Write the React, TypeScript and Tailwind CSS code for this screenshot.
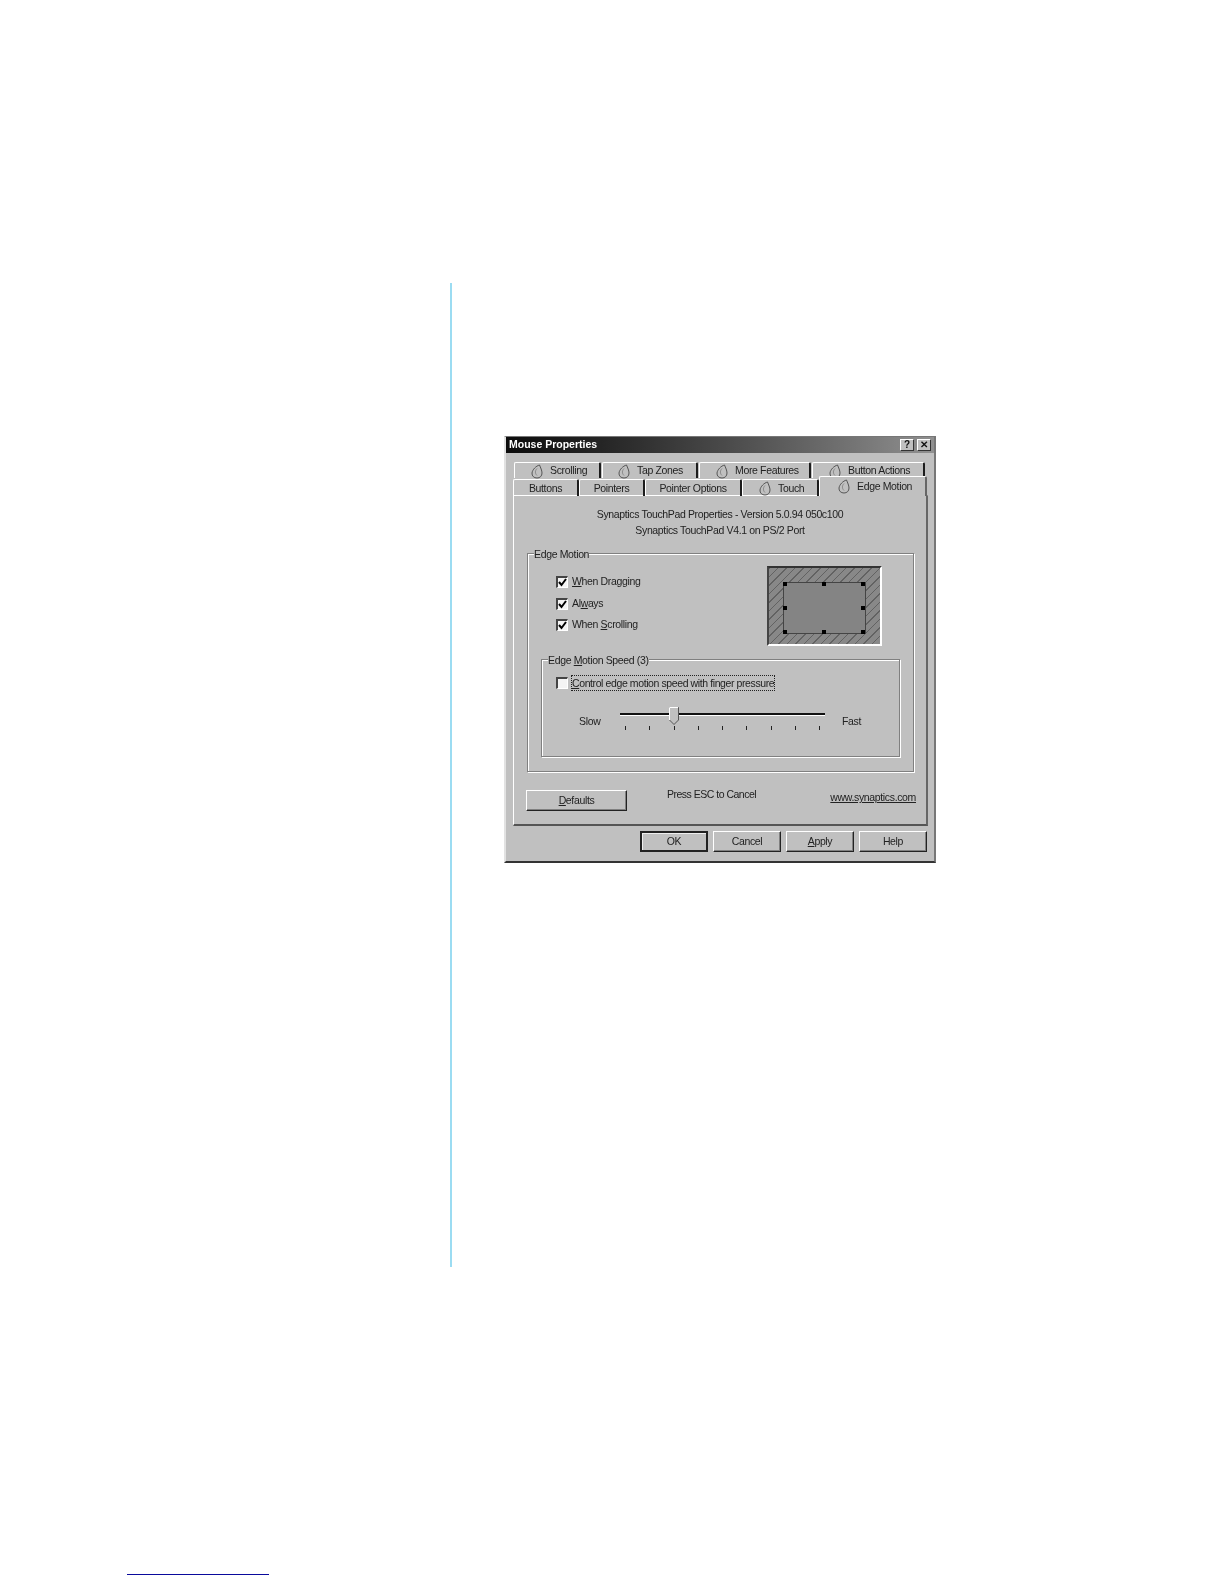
import React from "react";

const Drop = () => (
  <svg width="12" height="15" viewBox="0 0 12 15" className="shrink-0" fill="none" stroke="#555" strokeWidth="1">
    <path d="M8.5 1 C5 2 1.5 5.5 1 9 C.7 12 3 14 6 14 C9 14 11 12 11 9 C11 6.5 9.5 3.5 8.5 1" />
    <path d="M6 4.5 C4 6.5 3.8 9.5 6 11.5" stroke="#8a8a8a" />
  </svg>
);

const tabBase =
  "flex items-center border-t border-l border-r-2 border-t-white border-l-white border-r-[#1c1c1c] rounded-t-[2px] text-[10.5px] tracking-[-0.35px] text-[#222] whitespace-nowrap";

const BackTab = ({ w, label }: { w: string; label: string }) => (
  <div className={`${tabBase} h-[16px] pt-[1px] ${w}`}>
    <Drop />
    <span className="ml-[7px]">{label}</span>
  </div>
);

const PlainTab = ({ w, label }: { w: string; label: string }) => (
  <div className={`${tabBase} h-[17px] justify-center pt-[1px] ${w}`}>{label}</div>
);

const Check = ({ checked }: { checked?: boolean }) => (
  <span className="flex h-[12px] w-[12px] shrink-0 items-center justify-center border-t-2 border-l-2 border-r border-b border-t-[#444] border-l-[#444] border-r-white border-b-white bg-[#f4f4f4]">
    {checked && (
      <svg width="9" height="9" viewBox="0 0 9 9" fill="none" stroke="#000" strokeWidth="2">
        <path d="M1 4 L3.5 7 L8 1" />
      </svg>
    )}
  </span>
);

const Btn = ({ children, isDefault }: { children: React.ReactNode; isDefault?: boolean }) => (
  <div
    className={`flex h-[21px] w-[68px] items-center justify-center text-[10.5px] tracking-[-0.35px] text-[#222] ${
      isDefault
        ? "border-2 border-[#222] shadow-[inset_1px_1px_0_#eee]"
        : "border border-t-white border-l-white border-r-[#222] border-b-[#222] shadow-[inset_-1px_-1px_0_#808080]"
    }`}
  >
    {children}
  </div>
);

const Handle = ({ className }: { className: string }) => (
  <span className={`absolute h-[4px] w-[4px] bg-black ${className}`} />
);

export default function App() {
  return (
    <div className="flex h-[1584px] w-[1224px] flex-col bg-white font-['Liberation_Sans',Arial,sans-serif]">
      <div className="flex pt-[283px] pl-[450px]">
        <div className="h-[984px] w-[2px] bg-[#9bdcf2]" />
        <div className="mt-[153px] ml-[52px] h-[427px] w-[432px] self-start border-t border-r-2 border-b-2 border-l-2 border-t-[#777] border-r-[#777] border-b-[#333] border-l-[#e2e2e2] bg-[#c0c0c0] blur-[0.35px]">
          <div className="flex h-[16px] items-center justify-between bg-gradient-to-r from-[#0c0c0c] to-[#909090] pr-[3px] pl-[3px]">
            <span className="-mt-[1px] text-[10.5px] font-bold text-white">Mouse Properties</span>
            <div className="flex gap-[3px]">
              <span className="flex h-[12px] w-[14px] items-center justify-center border border-t-white border-l-white border-r-[#333] border-b-[#333] bg-[#c0c0c0] text-[10px] leading-none font-bold text-[#111]">?</span>
              <span className="flex h-[12px] w-[14px] items-center justify-center border border-t-white border-l-white border-r-[#333] border-b-[#333] bg-[#c0c0c0] text-[10px] leading-none font-bold text-[#111]">✕</span>
            </div>
          </div>

          <div className="mt-[9px] mr-[6px] ml-[7px]">
            <div className="flex gap-[1px] pl-[1px]">
              <BackTab w="w-[87px] pl-[16px]" label="Scrolling" />
              <BackTab w="w-[96px] pl-[15px]" label="Tap Zones" />
              <BackTab w="w-[112px] pl-[16px]" label="More Features" />
              <BackTab w="w-[113px] pl-[16px]" label="Button Actions" />
            </div>
            <div className="relative z-10 -mb-px flex items-end">
              <PlainTab w="w-[66px]" label="Buttons" />
              <PlainTab w="w-[66px]" label="Pointers" />
              <PlainTab w="w-[97px]" label="Pointer Options" />
              <div className={`${tabBase} h-[17px] w-[77px] pt-[1px] pl-[16px]`}>
                <Drop />
                <span className="ml-[7px]">Touch</span>
              </div>
              <div className="-mt-[2px] flex h-[20px] w-[108px] items-center rounded-t-[2px] border-t border-l border-r-2 border-t-white border-l-white border-r-[#666] bg-[#c0c0c0] pl-[18px] text-[10.5px] tracking-[-0.35px] whitespace-nowrap text-[#222]">
                <Drop />
                <span className="ml-[7px]">Edge Motion</span>
              </div>
            </div>

            <div className="h-[331px] border-t border-r-2 border-b-2 border-l border-t-white border-r-[#666] border-b-[#555] border-l-white pt-[10px]">
              <div className="text-center text-[10.5px] leading-[16px] tracking-[-0.35px] text-[#222]">
                <div>Synaptics TouchPad Properties - Version 5.0.94 050c100</div>
                <div>Synaptics TouchPad V4.1 on PS/2 Port</div>
              </div>

              <div className="relative mt-[15px] ml-[13px] h-[219px] w-[387px] border border-[#808080] shadow-[1px_1px_0_#fff,inset_1px_1px_0_#fff]">
                <span className="absolute -top-[7px] left-[6px] bg-[#c0c0c0] text-[10.5px] leading-[14px] tracking-[-0.35px] text-[#222]">Edge Motion</span>
                <div className="flex items-start justify-between pt-[12px] pr-[31px] pl-[28px]">
                  <div className="mt-[5px] flex flex-col text-[10.5px] tracking-[-0.35px] text-[#222]">
                    <label className="flex h-[22px] items-center gap-[4px]"><Check checked /><span><u>W</u>hen Dragging</span></label>
                    <label className="flex h-[21px] items-center gap-[4px]"><Check checked /><span>Al<u>w</u>ays</span></label>
                    <label className="flex h-[22px] items-center gap-[4px]"><Check checked /><span>When <u>S</u>crolling</span></label>
                  </div>
                  <div className="relative h-[80px] w-[115px] border-2 border-t-[#333] border-r-white border-b-white border-l-[#444] bg-[#808080] bg-[repeating-linear-gradient(135deg,#626262_0px,#626262_1px,#888888_1px,#888888_6px)]">
                    <div className="mx-[14px] mt-[14px] h-[52px] w-[83px] border border-[#444] bg-[#848484]" />
                    <Handle className="top-[14px] left-[14px]" />
                    <Handle className="top-[14px] left-[53px]" />
                    <Handle className="top-[14px] left-[92px]" />
                    <Handle className="top-[38px] left-[14px]" />
                    <Handle className="top-[38px] left-[92px]" />
                    <Handle className="top-[62px] left-[14px]" />
                    <Handle className="top-[62px] left-[53px]" />
                    <Handle className="top-[62px] left-[92px]" />
                  </div>
                </div>

                <div className="relative mt-[13px] ml-[13px] h-[98px] w-[359px] border border-[#808080] shadow-[1px_1px_0_#fff,inset_1px_1px_0_#fff]">
                  <span className="absolute -top-[7px] left-[6px] bg-[#c0c0c0] text-[10.5px] leading-[14px] tracking-[-0.35px] text-[#222]">Edge <u>M</u>otion Speed (3)</span>
                  <div className="flex items-center gap-[3px] pt-[15px] pl-[14px] text-[10.5px] tracking-[-0.4px] text-[#222]">
                    <Check />
                    <span className="h-[16px] border border-dotted border-[#222] leading-[14px] whitespace-nowrap"><u>C</u>ontrol edge motion speed with finger pressure</span>
                  </div>
                  <div className="mt-[16px] flex pl-[37px] text-[10.5px] tracking-[-0.35px] text-[#222]">
                    <span className="mt-[7px] h-[14px] w-[41px] leading-[14px]">Slow</span>
                    <div className="relative flex h-[24px] w-[205px] flex-col">
                      <div className="mt-[6px] h-[3px] border-t-2 border-b border-t-[#111] border-b-white" />
                      <div className="mt-[10px] flex justify-between px-[5px]">
                        {[0, 1, 2, 3, 4, 5, 6, 7, 8].map((i) => (
                          <span key={i} className="h-[4px] w-[1px] bg-[#222]" />
                        ))}
                      </div>
                      <svg className="absolute top-0 left-[49px]" width="10" height="18" viewBox="0 0 10 18">
                        <path d="M.5.5 H9.5 V13 L5 17.5 L.5 13 Z" fill="#c0c0c0" stroke="#555" />
                        <path d="M.5 13 V.5 H9" fill="none" stroke="#fff" />
                      </svg>
                    </div>
                    <span className="mt-[7px] ml-[17px] h-[14px] leading-[14px]">Fast</span>
                  </div>
                </div>
              </div>

              <div className="mt-[18px] ml-[12px] flex h-[21px] items-start pr-[10px]">
                <div className="flex h-[21px] w-[101px] items-center justify-center border border-t-white border-l-white border-r-[#222] border-b-[#222] text-[10.5px] tracking-[-0.35px] text-[#222] shadow-[inset_-1px_-1px_0_#808080]">
                  <span><u>D</u>efaults</span>
                </div>
                <span className="-mt-[3px] ml-[40px] text-[10.5px] leading-[14px] tracking-[-0.5px] text-[#222]">Press ESC to Cancel</span>
                <span className="ml-auto text-[10.5px] leading-[14px] tracking-[-0.35px] text-[#222] underline">www.synaptics.com</span>
              </div>
            </div>
          </div>

          <div className="mt-[5px] flex justify-end gap-[5px] pr-[7px]">
            <Btn isDefault>OK</Btn>
            <Btn>Cancel</Btn>
            <Btn><span><u>A</u>pply</span></Btn>
            <Btn>Help</Btn>
          </div>
        </div>
      </div>
      <div className="mt-[307px] ml-[127px] h-[1px] w-[142px] bg-[#0a0a9c]" />
    </div>
  );
}
